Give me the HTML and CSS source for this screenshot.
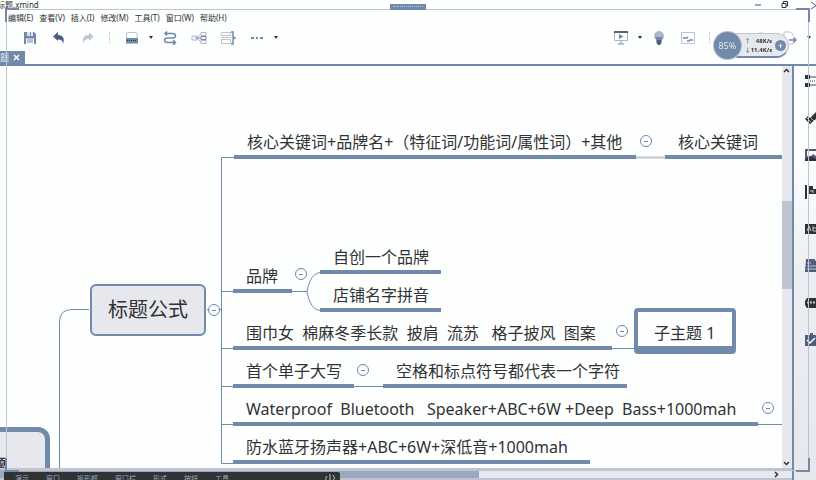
FILE: index.html
```
<!DOCTYPE html>
<html lang="zh-CN">
<head>
<meta charset="utf-8">
<title>标题.xmind</title>
<link rel="stylesheet" href="styles.css">
</head>
<body>
<div class="app">
  <header class="titlebar">
    <span class="title">标题.xmind</span>
    <span class="window-buttons">
      <button aria-label="最小化"><svg width="8" height="9" viewBox="0 0 8 9"><path d="M1 4h6" stroke="#7189ab" stroke-width="1.5"/></svg></button>
      <button aria-label="还原"><svg width="8" height="9" viewBox="0 0 8 9"><path d="M1 2.500h4v4H1zM2.500 2V.5h4V5H5" fill="none" stroke="#303234"/></svg></button>
      <button aria-label="关闭"><svg width="8" height="9" viewBox="0 0 8 9"><path d="M3 1l5 3.500L3 8" fill="none" stroke="#4d5f7d"/></svg></button>
    </span>
  </header>

  <nav class="menubar">
    <button>编辑(E)</button><button>查看(V)</button><button>插入(I)</button><button>修改(M)</button><button>工具(T)</button><button>窗口(W)</button><button>帮助(H)</button>
  </nav>

  <div class="toolbar">
    <div class="tools">
      <button class="tool" aria-label="保存"><svg width="14" height="14" viewBox="0 0 14 14"><path d="M1 1h10l2 2v10H1z" fill="#7189ab"/><path d="M4 1h6v4H4z" fill="#dfe3eb"/><path d="M7.500 1.500v3" stroke="#7189ab"/><path d="M3 7.500h8V13H3z" fill="#fdfefe"/><path d="M4 9h6M4 11h6" stroke="#7189ab"/></svg></button>
      <button class="tool" aria-label="撤销"><svg width="14" height="14" viewBox="0 0 14 14"><path d="M1 5.500L6 1v3c5 .2 7 3.500 5 9 .2-3-1.500-4.500-5-4.600V10z" fill="#4d5f7d"/></svg></button>
      <button class="tool" aria-label="重做"><svg width="14" height="14" viewBox="0 0 14 14"><path d="M12.500 5.500L8 1.500V4C3 4 1 7 2.500 12.500 3 9.500 4 8 8 8v2z" fill="#c0c3d0"/></svg></button>
      <span class="separator"></span>
      <button class="tool" aria-label="画布"><svg width="16" height="14" viewBox="0 0 16 14"><path d="M2.500 7V3q0-1.500 1.500-1.500h7.500q1.500 0 1.500 1.500v4" fill="none" stroke="#c0c3d0"/><path d="M2 7h12v5.500H2z" fill="#7189ab"/><path d="M3 9.500h10" stroke="#303234" stroke-dasharray="1 1"/></svg></button>
      <button class="caret" aria-label="画布选项"></button>
      <button class="tool" aria-label="联系"><svg width="14" height="14" viewBox="0 0 14 14"><path d="M2 2.500h7.500c4 0 4 4.500 0 4.500h-5c-4 0-4 4.500 0 4.500H12M10 9l2.500 2.500L10 14M4 .5L2 2.500l2 2" fill="none" stroke="#7189ab" stroke-width="1.500"/></svg></button>
      <button class="tool" aria-label="外框"><svg width="16" height="14" viewBox="0 0 16 14"><path d="M1 5h5v4H1zM10 1.500h5v3h-5zM10 9.500h5v3h-5z" fill="none" stroke="#aeb6c7"/><path d="M6 7l4-4M6 7l4 4" fill="none" stroke="#aeb6c7"/><path d="M10 5.500h5v3h-5zM4 7h6" fill="none" stroke="#7189ab"/></svg></button>
      <button class="tool" aria-label="概要"><svg width="16" height="14" viewBox="0 0 16 14"><path d="M1.500 1.500h9v3h-9zM1.500 6.500h9M1.500 8.500h9v4h-9z" fill="none" stroke="#c0c3d0"/><path d="M11 1h2v5l2 1-2 1v5h-2" fill="none" stroke="#7189ab" stroke-width="1.500"/></svg></button>
      <button class="tool" aria-label="更多"><svg width="14" height="14" viewBox="0 0 14 14"><path d="M1 6h3v2H1zM6 6h2v2H6zM10 6h3v2h-3z" fill="#7189ab"/></svg></button>
      <button class="caret" aria-label="更多选项"></button>
    </div>
    <div class="tools">
      <button class="tool" aria-label="演示"><svg width="16" height="14" viewBox="0 0 16 14"><path d="M1.500 1v8.500h13V1" fill="none" stroke="#aeb6c7"/><path d="M1 1h14" stroke="#303234" stroke-width="1.500"/><path d="M6 3l4.500 2.500L6 8z" fill="#7189ab"/><path d="M8 10v2.500M5 13h6" stroke="#7189ab"/></svg></button>
      <button class="caret" aria-label="演示选项"></button>
      <button class="tool" aria-label="灵感"><svg width="12" height="14" viewBox="0 0 12 14"><path d="M6 0a5 5 0 0 0-5 5c0 2 2 3 2.300 4.500h5.400C9 8 11 7 11 5a5 5 0 0 0-5-5z" fill="#aeb6c7"/><path d="M2 6h8L8.500 9.500h-5z" fill="#7189ab"/><path d="M3.500 9h5v3L7 14H5l-1.500-2z" fill="#4d5f7d"/></svg></button>
      <button class="tool" aria-label="风格"><svg width="16" height="14" viewBox="0 0 16 14"><path d="M1.500 1.500h13v11h-13z" fill="none" stroke="#c0c3d0"/><path d="M3 7h4l1-1M7 10h2l1-1h3" fill="none" stroke="#7189ab" stroke-width="1.500"/></svg></button>
      <span class="separator short"></span>
      <button class="tool" aria-label="搜索"></button>
      <button class="tool" aria-label="云"><svg width="14" height="14" viewBox="0 0 14 14"><path d="M2 9V5c1-4 9-4 10 0v4z" fill="none" stroke="#c0c3d0"/></svg></button>
      <button class="tool" aria-label="导出"><svg width="14" height="14" viewBox="0 0 14 14"><path d="M10 5V3L7 1H1v12h9v-2" fill="none" stroke="#c0c3d0"/><path d="M6 9h7M10.500 6.500L13 9l-2.500 2.500" fill="none" stroke="#7189ab" stroke-width="1.500"/></svg></button>
      <button class="caret" aria-label="导出选项"></button>
    </div>
  </div>

  <div class="tabs">
    <div class="tab"><span>题</span><button aria-label="关闭标签"><svg width="7" height="7" viewBox="0 0 7 7"><path d="M1 1l5 5M6 1L1 6" stroke="#fdfefe" stroke-width="1.500"/></svg></button></div>
  </div>

  <div class="workspace">
    <main class="editor">
      <div class="canvas">
        <svg class="links" width="782" height="402" viewBox="0 0 782 402" aria-hidden="true">
          <g fill="none" stroke="#7189ab">
            <path d="M89 243.500H72q-12.500 0-12.500 12.500V402M207 243.500h14M234 91.500h-12.500v306h12"/>
            <path d="M636 91.500h29" stroke="#c0c3d0" stroke-width="2"/>
            <path d="M221 225.500h12M292 225.500h15c2-12 7-19 14-19M307 225.500c2 12 7 19 14 19"/>
            <path d="M221 282.500h12M612 282.500h22M221 320.500h12M354 320.500h29M221 358.500h12M758 358.500h24"/>
          </g>
        </svg>
        <div class="central"><span>标题</span></div>
        <div class="main-topic">标题公式</div>
        <div class="topic t1">核心关键词+品牌名+（特征词/功能词/属性词）+其他</div>
        <div class="topic t1a">核心关键词</div>
        <div class="topic t2">品牌</div>
        <div class="topic t2a">自创一个品牌</div>
        <div class="topic t2b">店铺名字拼音</div>
        <div class="topic t3">围巾女  棉麻冬季长款  披肩  流苏   格子披风  图案</div>
        <div class="selection"><div class="topic">子主题 1</div></div>
        <div class="topic t4">首个单子大写</div>
        <div class="topic t4a">空格和标点符号都代表一个字符</div>
        <div class="topic t5">Waterproof  Bluetooth   Speaker+ABC+6W +Deep  Bass+1000mah</div>
        <div class="topic t6">防水蓝牙扬声器+ABC+6W+深低音+1000mah</div>
        <button class="fold f0" aria-label="折叠"></button>
        <button class="fold f1" aria-label="折叠"></button>
        <button class="fold f2" aria-label="折叠"></button>
        <button class="fold f3" aria-label="折叠"></button>
        <button class="fold f4" aria-label="折叠"></button>
        <button class="fold f5" aria-label="折叠"></button>
      </div>
      <div class="vscroll">
        <svg width="9" height="9" viewBox="0 0 9 9"><path d="M2 6l2.500-2.500L7 6" fill="none" stroke="#303234" stroke-width="1.500"/></svg>
        <div class="vtrack"><div class="vthumb"></div></div>
        <svg width="9" height="9" viewBox="0 0 9 9"><path d="M2 3l2.500 2.500L7 3" fill="none" stroke="#303234" stroke-width="1.500"/></svg>
      </div>
      <div class="hscroll">
        <div class="htrack"><div class="hthumb"></div></div>
        <svg width="9" height="9" viewBox="0 0 9 9"><path d="M3 2l2.500 2.500L3 7" fill="none" stroke="#303234" stroke-width="1.500"/></svg>
      </div>
    </main>
    <aside class="sidebar">
      <button aria-label="大纲"><svg width="11" height="14" viewBox="0 0 11 14"><path d="M0 1h5v4H0zM0 9h5v4H0z" fill="#303234"/><path d="M5 3h6M5 11h6" stroke="#7189ab" stroke-width="1.500"/><path d="M3 7h8" stroke="#303234" stroke-dasharray="1 1"/></svg></button>
      <button aria-label="格式"><svg width="11" height="14" viewBox="0 0 11 14"><path d="M0 8l3-3 2 2 6-6v7l-6 5z" fill="#303234"/><path d="M2 7l4 4M5 6l4 4" stroke="#aeb6c7"/></svg></button>
      <button aria-label="图片"><svg width="11" height="14" viewBox="0 0 11 14"><path d="M0 1h11v12H0z" fill="#4d5f7d"/><path d="M2 3h9v5L8 6 5 9 2 8z" fill="#fdfefe"/><path d="M0 13v-2l5-3 6 3v2z" fill="#303234"/></svg></button>
      <button aria-label="标记"><svg width="11" height="14" viewBox="0 0 11 14"><path d="M1 0v14" stroke="#303234" stroke-width="2"/><path d="M3 1h5v3h3v5H3z" fill="#303234"/><path d="M5 6h3M8 5v3" stroke="#c0c3d0"/></svg></button>
      <button aria-label="标签"><svg width="11" height="14" viewBox="0 0 11 14"><path d="M0 2h11v10H0z" fill="#303234"/><path d="M2 9l2-5 2 5M3 7h2M8 4v5h3M8 6h3" fill="none" stroke="#c0c3d0"/></svg></button>
      <button aria-label="备注"><svg width="11" height="14" viewBox="0 0 11 14"><path d="M1 0h8l2 2v11H0z" fill="#4d5f7d"/><path d="M2 4h4M2 7h9M2 10h9" stroke="#c0c3d0"/></svg></button>
      <button aria-label="批注"><svg width="11" height="14" viewBox="0 0 11 14"><path d="M2 2h9v10H2L0 9V5z" fill="#303234"/><path d="M2 6.500h9" stroke="#c0c3d0" stroke-width="2" stroke-dasharray="2 1"/></svg></button>
      <button aria-label="任务"><svg width="11" height="14" viewBox="0 0 11 14"><path d="M0 2h5V0h3v2h3v11H0z" fill="#4d5f7d"/><path d="M2 7l3 3 5-5" fill="none" stroke="#fdfefe" stroke-width="1.500"/></svg></button>
    </aside>
  </div>
</div>

<div class="frame" aria-hidden="true"><i class="grip"></i><i class="corner tl"></i><i class="corner tr"></i><i class="corner bl"></i><i class="corner br"></i></div>

<div class="monitor">
  <span class="percent">85%</span>
  <span class="rates"><span><b>↑</b>48K/s</span><span><b>↓</b>11.4K/s</span></span>
  <button class="boost" aria-label="加速">+</button>
</div>

<div class="dock">
  <span>演示</span><span>窗口</span><span>矩形框</span><span>窗口栏</span><span>形式</span><span>按钮</span><span>工具</span>
  <svg width="12" height="8" viewBox="0 0 12 8"><path d="M3 2Q0 5 3 7M6 0v7M9 1Q12 4 9 7" fill="none" stroke="#c0c3d0"/></svg>
</div>
</body>
</html>
```
FILE: styles.css
```
:root {
  --paper: #fdfefe;
  --blue: #7189ab;
  --light: #c0c3d0;
  --mist: #e6e8ee;
  --ink: #303234;
}
* { box-sizing: border-box; }
body {
  margin: 0;
  overflow: hidden;
  background: var(--paper);
  color: var(--ink);
  font-family: "Noto Sans", "Noto Sans CJK SC", sans-serif;
}
button {
  margin: 0;
  padding: 0;
  border: 0;
  background: none;
  color: inherit;
  font: inherit;
}
svg { display: block; }
.app { display: flex; flex-direction: column; height: 100vh; }

.titlebar {
  display: flex;
  justify-content: space-between;
  height: 10px;
  font-size: 8px;
  line-height: 9px;
}
.title { margin-left: -3px; }
.window-buttons { display: flex; gap: 19px; }

.menubar {
  display: flex;
  gap: 6px;
  height: 15px;
  padding-left: 8px;
  font-size: 8px;
  line-height: 14px;
}

.toolbar { display: flex; justify-content: space-between; height: 25px; padding: 0 3px 0 15px; }
.tools { display: flex; align-items: center; }
.tool { display: flex; justify-content: center; width: 29px; }
.caret { display: flex; justify-content: center; width: 9px; }
.caret::before { content: ""; border: 2px solid transparent; border-top: 3px solid var(--ink); border-bottom: 0; }
.separator { width: 1px; height: 12px; margin: 0 7px; border-left: 1px dotted var(--light); }

.tabs { display: flex; height: 16px; padding-top: 1px; border-bottom: 2px solid var(--blue); }
.tab {
  display: flex;
  align-items: center;
  gap: 4px;
  width: 25px;
  background: var(--blue);
  color: var(--mist);
  font-size: 9px;
  line-height: 12px;
}

.workspace { display: flex; flex: 1; min-height: 0; }
.editor {
  display: grid;
  flex: 1;
  grid-template: minmax(0, 1fr) 12px / minmax(0, 1fr) 10px;
  border-right: 2px solid var(--blue);
}
.canvas { position: relative; overflow: hidden; }
.links { position: absolute; left: 0; top: 0; }
.vscroll { display: flex; flex-direction: column; background: var(--mist); }
.vtrack { flex: 1; }
.vthumb { height: 23%; margin-top: 126px; background: var(--light); }
.hscroll {
  display: flex;
  grid-column: 1 / -1;
  align-items: center;
  padding-right: 11px;
  border-top: 2px solid var(--light);
  border-bottom: 2px solid var(--light);
  background: var(--mist);
}
.htrack { flex: 1; height: 100%; }
.hthumb { width: 62%; height: 100%; background: #9aa9c0; }
.sidebar {
  display: flex;
  flex-direction: column;
  align-items: flex-end;
  gap: 23px;
  width: 22px;
  padding-top: 8px;
  background: linear-gradient(var(--paper) 22%, #eceef3 50%, var(--mist));
}

/* Topics sit at free positions on the map. */
.topic {
  position: absolute;
  height: 30px;
  padding-left: 13px;
  border-bottom: 4px solid var(--blue);
  font-size: 16px;
  line-height: 26px;
  white-space: pre;
}
.t1 { left: 234px; top: 63px; width: 402px; }
.t1a { left: 665px; top: 63px; width: 117px; }
.t2 { left: 233px; top: 197px; width: 59px; }
.t2a { left: 320px; top: 178px; width: 121px; }
.t2b { left: 320px; top: 216px; width: 121px; }
.t3 { left: 233px; top: 254px; width: 379px; }
.t4 { left: 233px; top: 292px; width: 121px; }
.t4a { left: 383px; top: 292px; width: 244px; }
.t5 { left: 233px; top: 330px; width: 525px; }
.t6 { left: 233px; top: 368px; width: 357px; }
.selection {
  position: absolute;
  left: 634px;
  top: 242px;
  padding-top: 8px;
  border: 4px solid var(--blue);
  border-radius: 4px;
  background: var(--paper);
}
.selection .topic { position: static; width: 94px; padding-left: 16px; }
.main-topic {
  position: absolute;
  left: 90px;
  top: 218px;
  padding: 0 16px;
  border: 2px solid var(--blue);
  border-radius: 6px;
  background: var(--mist);
  font-size: 20px;
  line-height: 48px;
}
.central {
  position: absolute;
  left: -30px;
  top: 361px;
  width: 80px;
  height: 60px;
  padding: 21px 0 0 3px;
  border: 5px solid var(--blue);
  border-radius: 12px;
  background: var(--mist);
  font-size: 14px;
  font-weight: 700;
}
.fold {
  position: absolute;
  display: flex;
  align-items: center;
  justify-content: center;
  width: 12px;
  height: 12px;
  border: 1px solid var(--blue);
  border-radius: 50%;
  background: var(--paper);
}
.fold::before { content: ""; width: 4px; height: 1px; background: var(--blue); }
.f0 { left: 208px; top: 238px; }
.f1 { left: 640px; top: 69px; }
.f2 { left: 295px; top: 202px; }
.f3 { left: 616px; top: 259px; }
.f4 { left: 357px; top: 298px; }
.f5 { left: 762px; top: 336px; }

/* Recording frame over the window. */
.frame {
  position: fixed;
  inset: 9px 7px 9px 6px;
  border: 1px solid var(--light);
  pointer-events: none;
}
.corner { position: absolute; width: 14px; height: 14px; border: 0 solid var(--blue); }
.tl { left: -2px; top: -2px; border-width: 2px 0 0 2px; }
.tr { right: -2px; top: -2px; border-width: 2px 2px 0 0; }
.bl { left: -2px; bottom: -2px; border-width: 0 0 2px 2px; }
.br { right: -2px; bottom: -2px; border-width: 0 2px 2px 0; }
.grip {
  position: absolute;
  left: calc(50% - 18px);
  top: -6px;
  width: 36px;
  height: 6px;
  background: var(--blue);
}
.grip::after { content: ""; display: block; margin: 2px 3px; border-top: 1px dotted var(--light); }

.monitor {
  position: fixed;
  z-index: 1;
  right: 27px;
  top: 31px;
  display: flex;
  align-items: center;
  gap: 3px;
  width: 76px;
  height: 29px;
}
.monitor::before {
  content: "";
  position: absolute;
  inset: 2px 0 2px 14px;
  z-index: -1;
  border: 1px solid var(--light);
  border-bottom: 2px solid var(--blue);
  border-radius: 13px;
  background: var(--mist);
}
.percent {
  width: 29px;
  height: 29px;
  border: 1px solid var(--light);
  border-radius: 50%;
  background: var(--blue);
  color: var(--mist);
  font-size: 9px;
  line-height: 27px;
  text-align: center;
}
.rates { flex: 1; font-size: 6px; font-weight: 700; line-height: 9px; }
.rates span { display: flex; justify-content: space-between; }
.rates b { color: var(--blue); }
.boost {
  width: 11px;
  height: 11px;
  margin-right: 3px;
  border-radius: 50%;
  background: var(--blue);
  color: var(--paper);
  font-size: 9px;
  line-height: 11px;
}

.dock {
  position: fixed;
  left: 4px;
  bottom: 0;
  display: flex;
  gap: 17px;
  width: 336px;
  height: 8px;
  padding: 2px 4px 0 11px;
  overflow: hidden;
  border-radius: 0 2px 0 0;
  background: var(--ink);
  color: #9aa9c0;
  font-size: 7px;
  line-height: 9px;
}
.dock svg { flex: none; margin-left: auto; }
```
